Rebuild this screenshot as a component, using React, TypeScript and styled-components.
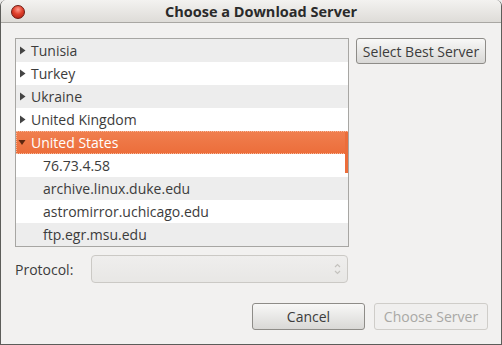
import React from 'react';
import styled, { createGlobalStyle } from 'styled-components';

const GlobalStyle = createGlobalStyle`
  html, body {
    margin: 0;
    padding: 0;
    background: #ecebea;
  }
  * {
    box-sizing: border-box;
  }
`

const Window = styled.div`
  width: 502px;
  height: 345px;
  display: flex;
  flex-direction: column;
  background-color: #f2f1f0;
  border: 1px solid #5d5d5a;
  border-top: none;
  border-radius: 6px 6px 0 0;
  overflow: hidden;
  font-family: "Open Sans", "DejaVu Sans", sans-serif;
  font-size: 14px;
  color: #3c3c3c;
`

const TitleBar = styled.div`
  height: 23px;
  flex-shrink: 0;
  display: flex;
  align-items: center;
  justify-content: center;
  position: relative;
  padding-left: 20px;
  background: linear-gradient(#f3f2f0, #dedcd8);
  border-bottom: 1px solid #a9a7a3;
  font-weight: bold;
  font-size: 14.5px;
  color: #2a2a2a;
`

const CloseButton = styled.div`
  position: absolute;
  left: 10px;
  top: 5px;
  width: 14px;
  height: 14px;
  border-radius: 50%;
  border: 1px solid #6e1a12;
  background: radial-gradient(circle at 50% 30%, #ff9a8c 0, #e0412d 45%, #a81d10 100%);
`

const Body = styled.div`
  flex: 1;
  display: flex;
  flex-direction: column;
  padding: 15px 13px 0 14px;
`

const TopRow = styled.div`
  display: flex;
  align-items: flex-start;
  gap: 7px;
`

const List = styled.div`
  position: relative;
  width: 334px;
  height: 209px;
  border: 1px solid #a7a6a3;
  background: #ffffff;
  overflow: hidden;
`

const Row = styled.div<{ $alt?: boolean; $selected?: boolean; $child?: boolean }>`
  height: 23px;
  display: flex;
  align-items: center;
  padding-left: ${p => (p.$child ? '27px' : '1px')};
  background: ${p => (p.$selected ? 'linear-gradient(#f07f4f, #ec6d3a)' : p.$alt ? '#ededed' : '#ffffff')};
  color: ${p => (p.$selected ? '#ffffff' : '#3c3c3c')};
  outline: ${p => (p.$selected ? '1px dotted #f7b799' : 'none')};
  outline-offset: -1px;
`

const Expander = styled.svg`
  width: 13px;
  height: 13px;
  margin-right: 1px;
  flex-shrink: 0;
`

const ScrollIndicator = styled.div`
  position: absolute;
  right: 0;
  top: 93px;
  width: 3px;
  height: 41px;
  background: #ec6d3a;
`

const Button = styled.button<{ $width: number }>`
  width: ${p => p.$width}px;
  height: 27px;
  border: 1px solid #8e8c88;
  border-radius: 3px;
  background: linear-gradient(#f8f8f7, #d9d8d6);
  font-family: inherit;
  font-size: 14px;
  color: #3c3c3c;
  padding: 0;
  &:disabled {
    border-color: #cfcdc9;
    background: #f0efee;
    color: #a9a8a5;
  }
`

const ProtocolRow = styled.div`
  display: flex;
  align-items: center;
  margin-top: 8px;
  height: 28px;
`

const Label = styled.div`
  width: 76px;
  flex-shrink: 0;
`

const Combo = styled.div`
  width: 257px;
  height: 28px;
  border: 1px solid #cbc9c5;
  border-radius: 4px;
  background: linear-gradient(#efeeed, #e8e7e5);
  display: flex;
  align-items: center;
  justify-content: flex-end;
  padding-right: 6px;
`

const ButtonRow = styled.div`
  display: flex;
  justify-content: flex-end;
  gap: 9px;
  margin-top: 20px;
`

function Arrow({ open, color }: { open?: boolean; color: string }) {
  return (
    <Expander viewBox="0 0 13 13">
      {open ? <polygon points="1.5,4 8.5,4 5,9" fill={color} /> : <polygon points="3,2.5 8.5,6.5 3,10.5" fill={color} />}
    </Expander>
  );
}

const countries = ['Tunisia', 'Turkey', 'Ukraine', 'United Kingdom'];
const servers = ['76.73.4.58', 'archive.linux.duke.edu', 'astromirror.uchicago.edu', 'ftp.egr.msu.edu'];

export default function App() {
  return (
    <>
      <GlobalStyle />
      <Window>
        <TitleBar>
          <CloseButton />
          Choose a Download Server
        </TitleBar>
        <Body>
          <TopRow>
            <List>
              {countries.map((c, i) => (
                <Row key={c} $alt={i % 2 === 0}>
                  <Arrow color="#444444" />
                  {c}
                </Row>
              ))}
              <Row $selected>
                <Arrow open color="#5e260e" />
                United States
              </Row>
              {servers.map((s, i) => (
                <Row key={s} $child $alt={i % 2 === 1}>
                  {s}
                </Row>
              ))}
              <ScrollIndicator />
            </List>
            <Button $width={130} style={{ height: 26 }}>Select Best Server</Button>
          </TopRow>
          <ProtocolRow>
            <Label>Protocol:</Label>
            <Combo>
              <svg width="7" height="14" viewBox="0 0 7 14">
                <polyline points="1,5 3.5,2.5 6,5" fill="none" stroke="#c4c2be" strokeWidth="1.2" />
                <polyline points="1,9 3.5,11.5 6,9" fill="none" stroke="#c4c2be" strokeWidth="1.2" />
              </svg>
            </Combo>
          </ProtocolRow>
          <ButtonRow>
            <Button $width={113}>Cancel</Button>
            <Button $width={114} disabled>Choose Server</Button>
          </ButtonRow>
        </Body>
      </Window>
    </>
  );
}
